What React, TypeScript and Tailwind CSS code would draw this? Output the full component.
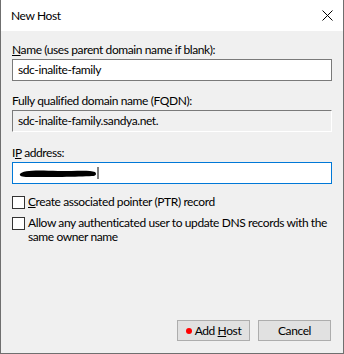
import React from "react";

const font = { fontFamily: 'Lato, "Noto Sans", "Liberation Sans", sans-serif' };

function Checkbox() {
  return <div className="w-[13px] h-[13px] border border-[#333333] bg-white shrink-0" />;
}

export default function App() {
  return (
    <div
      className="w-[344px] h-[354px] flex flex-col border-x border-b border-[#6f6f6f] text-[12px] tracking-[-0.4px] text-black bg-[#f0f0f0]"
      style={font}
    >
      <div className="h-[31px] bg-white flex items-center justify-between pl-[10px] pr-[10px] shrink-0">
        <span className="text-[12px] leading-[16px]">New Host</span>
        <svg width="11" height="11" viewBox="0 0 11 11">
          <path d="M0.5 0.5 L10.5 10.5 M10.5 0.5 L0.5 10.5" stroke="#000" strokeWidth="1" />
        </svg>
      </div>
      <div className="flex-1 flex flex-col px-[11px] pt-[11px]">
        <div className="leading-[16px]">
          <span className="underline">N</span>ame (uses parent domain name if blank):
        </div>
        <div className="mt-[1px] h-[22px] border border-[#7a7a7a] bg-white flex items-center px-[5px] leading-[16px]">
          sdc-inalite-family
        </div>
        <div className="mt-[12px] leading-[16px]">Fully qualified domain name (FQDN):</div>
        <div className="mt-[1px] h-[22px] border border-[#7a7a7a] border-r-[#ffffff] border-b-[#ffffff] bg-[#f0f0f0] flex items-center px-[5px] leading-[16px]">
          sdc-inalite-family.sandya.net.
        </div>
        <div className="mt-[13px] leading-[16px]">
          I<span className="underline">P</span> address:
        </div>
        <div className="mt-[1px] h-[22px] border border-[#0078d7] bg-white flex items-center pl-[5px]">
          <svg width="82" height="14" viewBox="0 0 82 14">
            <path d="M2 8 C 4 4, 20 4, 40 5 C 60 5, 72 4, 77 6 C 79 8, 78 10, 74 10 C 60 11, 30 11, 10 11 C 4 11, 1 10, 2 8 Z" fill="#000" />
            <path d="M80 1 L80 13" stroke="#000" strokeWidth="1" />
          </svg>
        </div>
        <div className="mt-[10px] flex items-center gap-[3px] leading-[16px]">
          <Checkbox />
          <span>
            <span className="underline">C</span>reate associated pointer (PTR) record
          </span>
        </div>
        <div className="mt-[6px] flex items-start gap-[3px] leading-[14px]">
          <div className="mt-[1px]">
            <Checkbox />
          </div>
          <span>
            Allow any authenticated user to update DNS records with the same owner name
          </span>
        </div>
        <div className="flex-1" />
        <div className="flex justify-end gap-[8px] pb-[12px] pr-[1px]">
          <div className="w-[73px] h-[21px] border border-[#adadad] bg-[#e1e1e1] flex items-center justify-center gap-[3px]">
            <span className="w-[6px] h-[6px] rounded-full bg-[#ff0000] inline-block" />
            <span>
              Add <span className="underline">H</span>ost
            </span>
          </div>
          <div className="w-[73px] h-[21px] border border-[#adadad] bg-[#e1e1e1] flex items-center justify-center">
            Cancel
          </div>
        </div>
      </div>
    </div>
  );
}
